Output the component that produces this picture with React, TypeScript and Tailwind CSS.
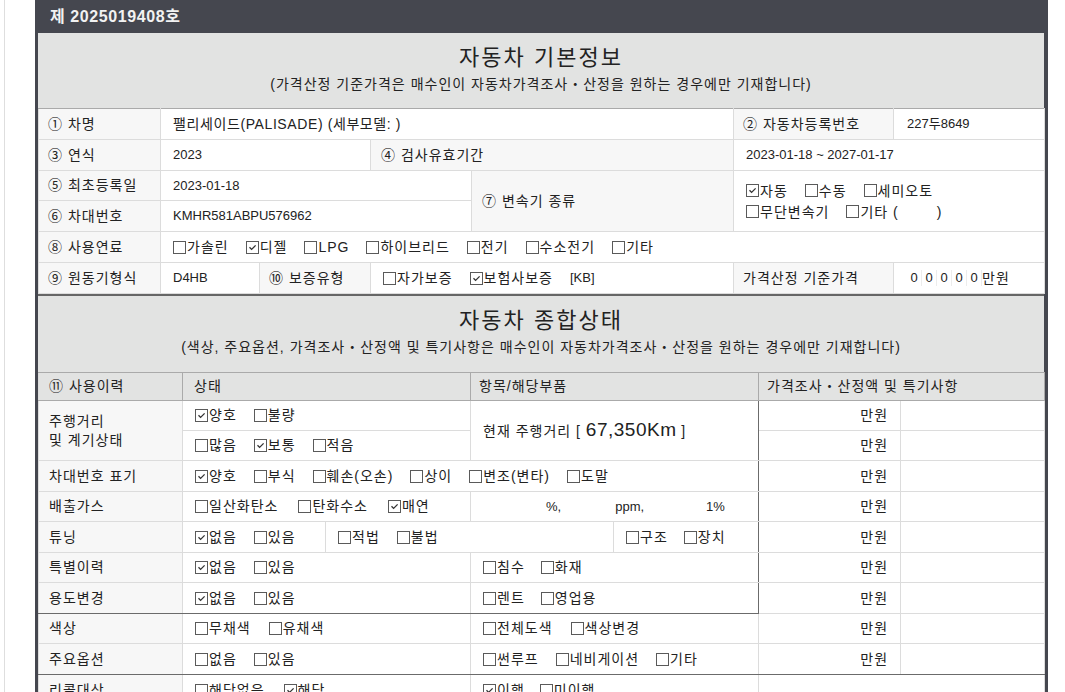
import React from "react";

const LABEL = "border border-[#dcdcdc] bg-[#f7f7f7] pl-[9px] text-left align-middle font-normal";
const VALUE = "border border-[#dcdcdc] bg-white pl-[12px] align-middle";
const LATIN = "text-[13px] tracking-normal";
const S2LABEL = "border border-[#dcdcdc] bg-[#f7f7f7] pl-[10px] text-left align-middle font-normal";
const S2CELL = "border border-[#dcdcdc] bg-white pl-[12px] align-middle";
const WON = "border border-[#dcdcdc] bg-white pr-[12px] text-right align-middle";
const DARK_R = "border-r-[#6b6b6b]";
const DARK_B = "border-b-[#6b6b6b]";

type Item = [string, boolean?];

function Check({ on }: { on?: boolean }) {
  return (
    <span className="inline-flex h-[13px] w-[13px] shrink-0 items-center justify-center border border-[#5a5a5a] bg-white">
      {on ? (
        <svg viewBox="0 0 11 11" className="h-[11px] w-[11px]">
          <polyline points="2.5,5.2 4.6,7.4 8.6,3.4" fill="none" stroke="#333" strokeWidth="1.3" />
        </svg>
      ) : null}
    </span>
  );
}

function Opts({ items, gap }: { items: Item[]; gap?: string }) {
  return (
    <div className={"flex items-center " + (gap ?? "gap-x-[17px]")}>
      {items.map(([label, on]) => (
        <span key={label} className="inline-flex items-center gap-px">
          <Check on={on} />
          <span>{label}</span>
        </span>
      ))}
    </div>
  );
}

function SectionHead({ title, note, top }: { title: string; note: string; top?: boolean }) {
  return (
    <div
      className={
        "flex flex-col items-center bg-[#e2e3e2] text-[#222] " +
        (top ? "pt-[12px] pb-[15px]" : "border-t-2 border-[#666] pt-[12px] pb-[16px]")
      }
    >
      <div className="text-[22px] leading-[26px] tracking-[2px]">{title}</div>
      <div className="mt-[4px] text-[14px] leading-[18px]">{note}</div>
    </div>
  );
}

function BasicInfo() {
  return (
    <table className="w-full table-fixed border-collapse text-[14px] text-[#222]">
      <colgroup>
        <col className="w-[122px]" />
        <col className="w-[99px]" />
        <col className="w-[111px]" />
        <col className="w-[101px]" />
        <col className="w-[262px]" />
        <col className="w-[160px]" />
        <col className="w-[151px]" />
      </colgroup>
      <tbody>
        <tr className="h-[31px]">
          <th className={LABEL + " border-t-[#aaa]"}>① 차명</th>
          <td colSpan={4} className={VALUE + " border-t-[#aaa] tracking-[0.6px]"}>
            팰리세이드(PALISADE) (세부모델: )
          </td>
          <th className={LABEL + " border-t-[#aaa]"}>② 자동차등록번호</th>
          <td className={VALUE + " border-t-[#aaa] pl-[13px] " + LATIN}>227두8649</td>
        </tr>
        <tr className="h-[31px]">
          <th className={LABEL}>③ 연식</th>
          <td colSpan={2} className={VALUE + " " + LATIN}>2023</td>
          <th colSpan={2} className={LABEL + " pl-[10px]"}>④ 검사유효기간</th>
          <td colSpan={2} className={VALUE + " " + LATIN}>2023-01-18 ~ 2027-01-17</td>
        </tr>
        <tr className="h-[30px]">
          <th className={LABEL}>⑤ 최초등록일</th>
          <td colSpan={3} className={VALUE + " " + LATIN}>2023-01-18</td>
          <th rowSpan={2} className={LABEL + " pl-[10px]"}>⑦ 변속기 종류</th>
          <td rowSpan={2} colSpan={2} className={VALUE}>
            <div className="flex flex-col gap-[3px] leading-[18px]">
              <Opts items={[["자동", true], ["수동"], ["세미오토"]]} />
              <div className="flex items-center gap-x-[17px]">
                <Opts items={[["무단변속기"]]} />
                <span className="inline-flex items-center gap-px">
                  <Check />
                  <span>기타 (</span>
                  <span className="w-[36px]" />
                  <span>)</span>
                </span>
              </div>
            </div>
          </td>
        </tr>
        <tr className="h-[31px]">
          <th className={LABEL}>⑥ 차대번호</th>
          <td colSpan={3} className={VALUE + " " + LATIN}>KMHR581ABPU576962</td>
        </tr>
        <tr className="h-[31px]">
          <th className={LABEL}>⑧ 사용연료</th>
          <td colSpan={6} className={VALUE}>
            <Opts
              items={[["가솔린"], ["디젤", true], ["LPG"], ["하이브리드"], ["전기"], ["수소전기"], ["기타"]]}
            />
          </td>
        </tr>
        <tr className="h-[31px]">
          <th className={LABEL}>⑨ 원동기형식</th>
          <td className={VALUE + " " + LATIN}>D4HB</td>
          <th className={LABEL}>⑩ 보증유형</th>
          <td colSpan={2} className={VALUE}>
            <div className="flex items-center gap-x-[17px]">
              <Opts items={[["자가보증"], ["보험사보증", true]]} />
              <span className={LATIN}>[KB]</span>
            </div>
          </td>
          <th className={LABEL}>가격산정 기준가격</th>
          <td className={VALUE + " pl-[13px]"}>
            <div className="flex items-center">
              {[0, 1, 2, 3, 4].map((i) => (
                <span
                  key={i}
                  className="inline-block w-[15px] border-r border-[#ececec] text-center text-[13px] leading-[16px] tracking-normal last:border-r-0"
                >
                  0
                </span>
              ))}
              <span>만원</span>
            </div>
          </td>
        </tr>
      </tbody>
    </table>
  );
}

function Overall() {
  return (
    <table className="w-full table-fixed border-collapse text-[14px] text-[#222]">
      <colgroup>
        <col className="w-[144px]" />
        <col className="w-[143px]" />
        <col className="w-[145px]" />
        <col className="w-[143px]" />
        <col className="w-[145px]" />
        <col className="w-[142px]" />
        <col className="w-[144px]" />
      </colgroup>
      <tbody>
        <tr className="h-[28px] bg-[#e2e3e2]">
          <th className="border border-[#aaa] border-l-[#dcdcdc] pl-[10px] text-left font-normal">⑪ 사용이력</th>
          <th colSpan={2} className="border border-[#aaa] pl-[11px] text-left font-normal">상태</th>
          <th colSpan={2} className="border border-[#aaa] pl-[8px] text-left font-normal">항목/해당부품</th>
          <th colSpan={2} className="border border-[#aaa] pl-[8px] text-left font-normal">
            가격조사・산정액 및 특기사항
          </th>
        </tr>
        <tr className="h-[30px]">
          <th rowSpan={2} className={S2LABEL + " leading-[19px]"}>
            주행거리
            <br />및 계기상태
          </th>
          <td colSpan={2} className={S2CELL}>
            <Opts items={[["양호", true], ["불량"]]} />
          </td>
          <td rowSpan={2} colSpan={2} className={S2CELL + " " + DARK_R}>
            현재 주행거리 [ <span className="text-[19px] tracking-[0.5px]">67,350Km</span> ]
          </td>
          <td className={WON}>만원</td>
          <td className={S2CELL} />
        </tr>
        <tr className="h-[30px]">
          <td colSpan={2} className={S2CELL}>
            <Opts items={[["많음"], ["보통", true], ["적음"]]} />
          </td>
          <td className={WON}>만원</td>
          <td className={S2CELL} />
        </tr>
        <tr className="h-[31px]">
          <th className={S2LABEL}>차대번호 표기</th>
          <td colSpan={4} className={S2CELL + " " + DARK_R}>
            <Opts items={[["양호", true], ["부식"], ["훼손(오손)"], ["상이"], ["변조(변타)"], ["도말"]]} />
          </td>
          <td className={WON}>만원</td>
          <td className={S2CELL} />
        </tr>
        <tr className="h-[30px]">
          <th className={S2LABEL}>배출가스</th>
          <td colSpan={2} className={S2CELL}>
            <Opts items={[["일산화탄소"], ["탄화수소"], ["매연", true]]} gap="gap-x-[20px]" />
          </td>
          <td colSpan={2} className={S2CELL + " " + DARK_R}>
            <div className="flex items-center text-[13px] tracking-normal">
              <span className="w-[63px]" />
              <span>%,</span>
              <span className="w-[54px]" />
              <span>ppm,</span>
              <span className="w-[62px]" />
              <span>1%</span>
            </div>
          </td>
          <td className={WON}>만원</td>
          <td className={S2CELL} />
        </tr>
        <tr className="h-[31px]">
          <th className={S2LABEL}>튜닝</th>
          <td className={S2CELL}>
            <Opts items={[["없음", true], ["있음"]]} />
          </td>
          <td colSpan={2} className={S2CELL}>
            <Opts items={[["적법"], ["불법"]]} />
          </td>
          <td className={S2CELL + " " + DARK_R}>
            <Opts items={[["구조"], ["장치"]]} gap="gap-x-[16px]" />
          </td>
          <td className={WON}>만원</td>
          <td className={S2CELL} />
        </tr>
        <tr className="h-[30px]">
          <th className={S2LABEL}>특별이력</th>
          <td colSpan={2} className={S2CELL}>
            <Opts items={[["없음", true], ["있음"]]} />
          </td>
          <td colSpan={2} className={S2CELL + " " + DARK_R}>
            <Opts items={[["침수"], ["화재"]]} gap="gap-x-[16px]" />
          </td>
          <td className={WON}>만원</td>
          <td className={S2CELL} />
        </tr>
        <tr className="h-[31px]">
          <th className={S2LABEL + " " + DARK_B}>용도변경</th>
          <td colSpan={2} className={S2CELL + " " + DARK_B}>
            <Opts items={[["없음", true], ["있음"]]} />
          </td>
          <td colSpan={2} className={S2CELL + " " + DARK_R + " " + DARK_B}>
            <Opts items={[["렌트"], ["영업용"]]} gap="gap-x-[16px]" />
          </td>
          <td className={WON}>만원</td>
          <td className={S2CELL} />
        </tr>
        <tr className="h-[30px]">
          <th className={S2LABEL}>색상</th>
          <td colSpan={2} className={S2CELL}>
            <Opts items={[["무채색"], ["유채색"]]} gap="gap-x-[18px]" />
          </td>
          <td colSpan={2} className={S2CELL}>
            <Opts items={[["전체도색"], ["색상변경"]]} gap="gap-x-[18px]" />
          </td>
          <td className={WON}>만원</td>
          <td className={S2CELL} />
        </tr>
        <tr className="h-[31px]">
          <th className={S2LABEL + " " + DARK_B}>주요옵션</th>
          <td colSpan={2} className={S2CELL + " " + DARK_B}>
            <Opts items={[["없음"], ["있음"]]} />
          </td>
          <td colSpan={2} className={S2CELL + " " + DARK_B}>
            <Opts items={[["썬루프"], ["네비게이션"], ["기타"]]} gap="gap-x-[17px]" />
          </td>
          <td className={WON + " " + DARK_B}>만원</td>
          <td className={S2CELL + " " + DARK_B} />
        </tr>
        <tr className="h-[31px]">
          <th className={S2LABEL}>리콜대상</th>
          <td colSpan={2} className={S2CELL}>
            <Opts items={[["해당없음"], ["해당", true]]} gap="gap-x-[19px]" />
          </td>
          <td colSpan={2} className={S2CELL}>
            <Opts items={[["이행", true], ["미이행"]]} gap="gap-x-[15px]" />
          </td>
          <td colSpan={2} className={S2CELL} />
        </tr>
      </tbody>
    </table>
  );
}

export default function App() {
  return (
    <div className="min-h-screen bg-white pl-[4px] font-['Liberation_Sans','Noto_Sans_CJK_KR',sans-serif] tracking-[1px]">
      <div className="min-h-screen border-l border-[#dedede] pl-[30px]">
        <div className="w-[1013px] border-x-[3px] border-r-[4px] border-[#45474f] bg-[#45474f]">
          <div className="flex h-[33px] items-center pl-[12px] text-[16px] font-bold tracking-[0.6px] text-[#f2f2f2]">
            제 2025019408호
          </div>
          <div className="bg-white">
            <SectionHead
              top
              title="자동차 기본정보"
              note="(가격산정 기준가격은 매수인이 자동차가격조사・산정을 원하는 경우에만 기재합니다)"
            />
            <BasicInfo />
            <SectionHead
              title="자동차 종합상태"
              note="(색상, 주요옵션, 가격조사・산정액 및 특기사항은 매수인이 자동차가격조사・산정을 원하는 경우에만 기재합니다)"
            />
            <Overall />
          </div>
        </div>
      </div>
    </div>
  );
}
